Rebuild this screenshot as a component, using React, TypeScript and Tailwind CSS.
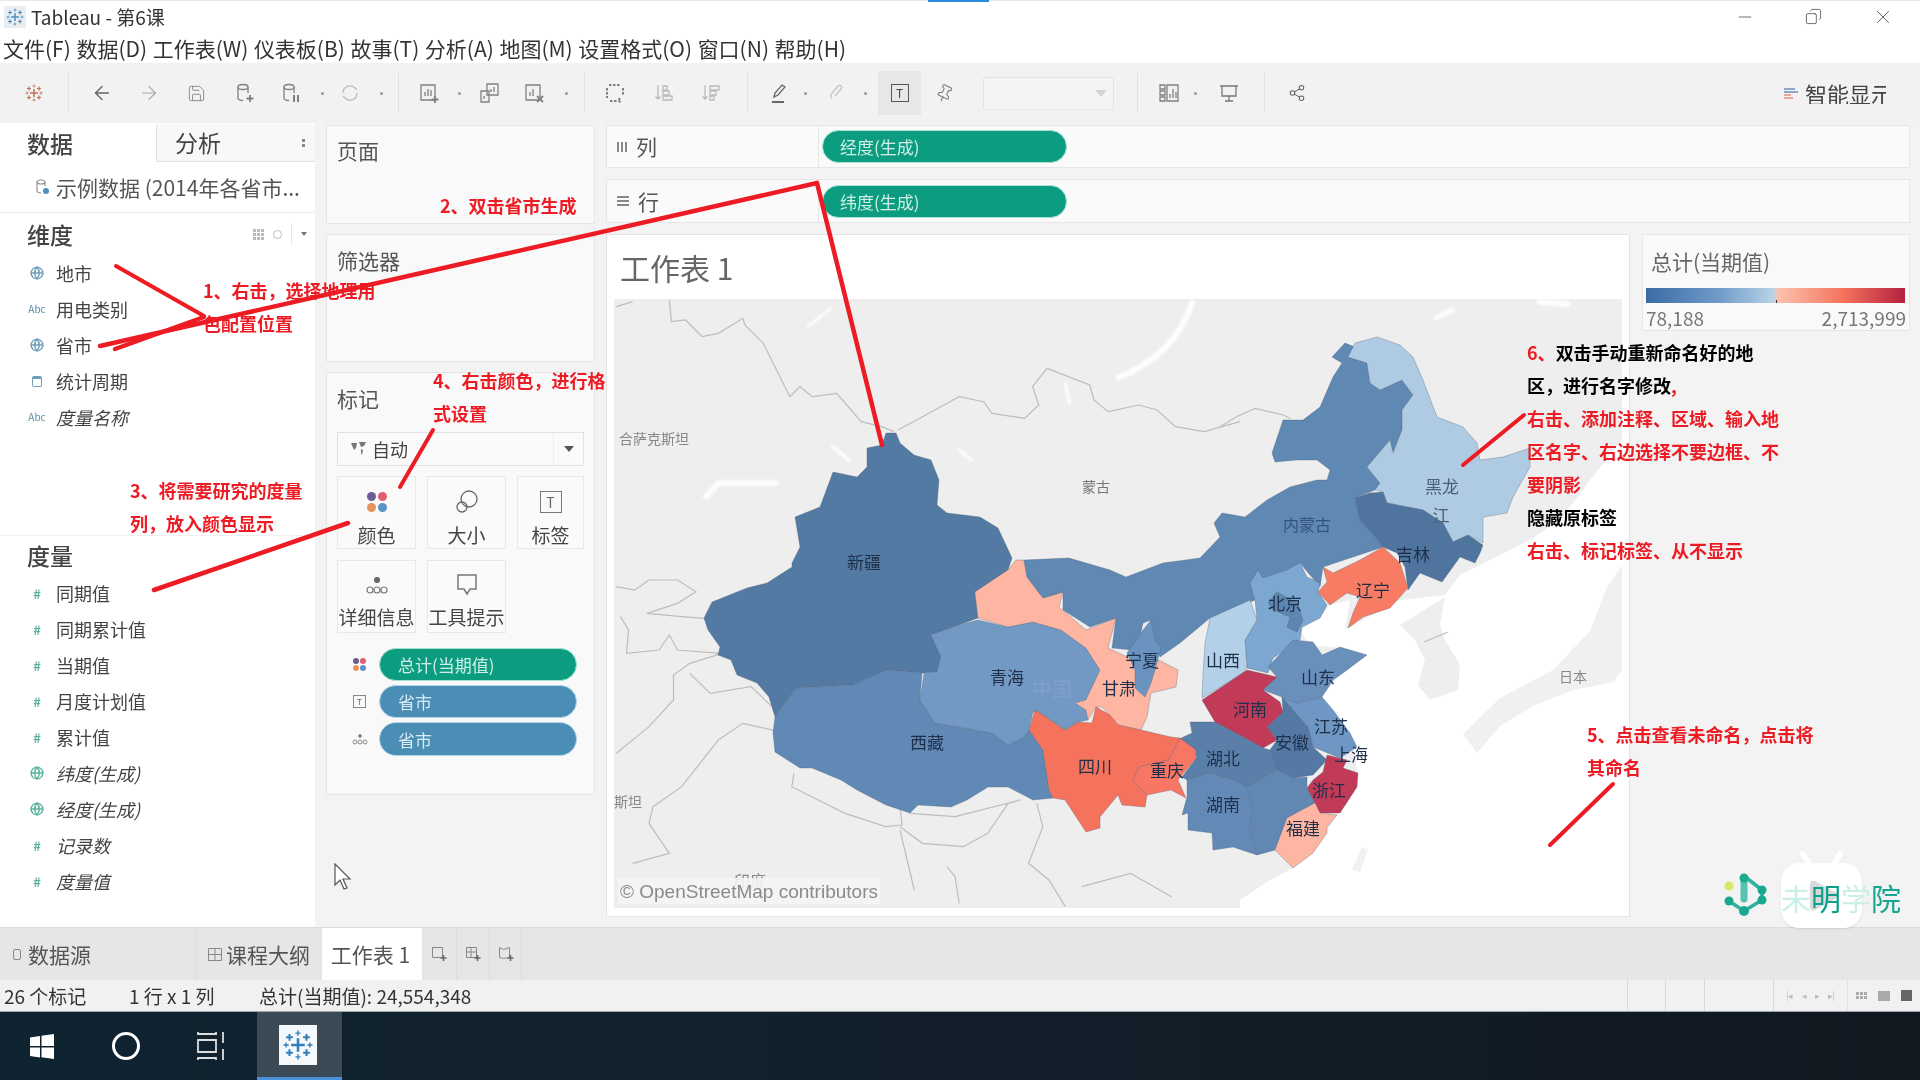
import React from "react";
import { ArrowLeft, ArrowRight, Save, Share2, Pin, Minus, X, Copy, Globe } from "lucide-react";

const z4 = (a: number[]) => { const o: string[] = []; for (let i = 0; i < a.length; i += 2) o.push(`${600 + a[i] / 2.45},${230 + a[i + 1] / 3}`); return o.join(" "); };
const z5 = (a: number[]) => { const o: string[] = []; for (let i = 0; i < a.length; i += 2) o.push(`${600 + a[i] / 2.45},${560 + a[i + 1] / 3}`); return o.join(" "); };
const z10 = (a: number[]) => { const o: string[] = []; for (let i = 0; i < a.length; i += 2) o.push(`${1220 + a[i] / 3},${320 + a[i + 1] / 3}`); return o.join(" "); };

const provinces: { c: string; p: string }[] = [
  { c: "#537aa3", p: "886,433 896,433 900,443 914,455 931,460 939,480 937,505 947,513 980,517 998,528 1012,558 1008,570 975,592 978,618 959,625 931,635 941,657 937,672 922,673 886,670 853,685 796,688 780,710 775,717 769,697 757,683 737,675 731,660 718,655 720,647 708,630 704,618 712,602 747,588 767,583 792,567 792,563 800,547 795,517 820,507 833,472 857,477 867,467 867,448 882,445" },
  { c: "#6089b5", p: "775,717 796,688 853,685 886,670 922,673 920,700 935,723 992,733 1008,745 1024,737 1029,730 1043,750 1049,790 1053,798 1033,800 1008,787 988,787 967,800 951,807 918,805 910,813 886,805 857,790 841,780 812,768 800,768 775,752 773,733" },
  { c: "#7199c4", p: "931,635 959,625 978,620 1008,627 1033,622 1061,630 1086,648 1100,670 1086,700 1075,703 1086,710 1088,720 1078,722 1065,730 1043,715 1033,712 1029,730 1024,737 1008,745 992,733 935,723 920,700 924,673 937,672 941,657" },
  { c: "#feb6a2", p: "1016,560 1024,560 1027,577 1043,598 1063,592 1059,607 1086,630 1116,618 1108,648 1127,657 1159,660 1178,670 1176,687 1151,693 1147,717 1141,730 1118,725 1102,707 1096,707 1088,720 1086,710 1075,703 1086,700 1100,670 1086,648 1061,630 1033,622 1008,627 978,618 975,592 1008,570" },
  { c: "#5f88b2", p: "1024,560 1069,558 1110,570 1126,577 1163,563 1200,558 1220,537 1214,523 1222,513 1245,517 1267,500 1290,487 1317,480 1327,480 1330,470 1317,460 1297,460 1275,462 1272,453 1283,420 1303,420 1320,407 1333,377 1342,363 1332,357 1345,343 1355,347 1348,357 1367,363 1370,383 1380,390 1402,380 1413,395 1402,410 1402,430 1393,453 1390,440 1367,467 1380,483 1375,490 1355,498 1360,520 1378,540 1383,547 1323,567 1320,587 1300,563 1287,570 1263,578 1250,583 1255,600 1217,617 1210,618 1180,643 1160,657 1155,640 1151,620 1143,623 1140,637 1133,650 1112,648 1116,618 1090,627 1063,610 1063,592 1043,598 1027,577" },
  { c: "#6b93bf", p: "1143,630 1151,620 1155,640 1161,648 1155,670 1151,683 1145,697 1135,688 1135,670 1127,653" },
  { c: "#aecbe3", p: "1348,357 1355,343 1377,337 1400,345 1413,357 1423,380 1437,417 1463,427 1477,443 1480,460 1503,457 1530,448 1530,467 1513,497 1507,513 1483,517 1483,543 1468,535 1453,542 1443,523 1423,510 1387,503 1383,492 1375,490 1380,483 1367,467 1390,440 1393,453 1402,430 1402,410 1413,395 1402,380 1380,390 1370,383 1367,363" },
  { c: "#4f759e", p: "1355,498 1370,493 1383,492 1387,503 1423,510 1443,523 1453,542 1468,535 1483,545 1480,553 1475,563 1460,557 1442,582 1420,573 1408,590 1405,567 1397,553 1383,547 1378,540 1360,520" },
  { c: "#7ba7d0", p: "1250,583 1258,570 1263,578 1287,570 1300,563 1307,577 1320,583 1318,592 1327,605 1320,618 1302,627 1300,640 1273,658 1268,673 1247,668 1245,640 1257,620 1255,600" },
  { c: "#5d86b0", p: "1277,592 1297,603 1303,620 1297,632 1287,627 1290,617 1273,610 1268,603" },
  { c: "#b2d0e8", p: "1210,618 1250,600 1257,620 1245,640 1247,668 1243,673 1202,698 1203,673 1205,643" },
  { c: "#6f97c3", p: "1282,697 1297,703 1322,697 1333,710 1350,733 1357,747 1340,758 1313,747 1308,727 1293,710" },
  { c: "#5379a4", p: "1282,697 1293,710 1308,727 1313,747 1327,760 1313,775 1293,778 1277,770 1270,750 1277,740 1267,727 1283,712" },
  { c: "#6990bb", p: "1268,667 1293,640 1313,642 1322,655 1340,647 1367,655 1347,670 1333,680 1322,697 1297,703 1282,697 1263,690 1277,677" },
  { c: "#c13a58", p: "1247,670 1277,677 1263,690 1280,702 1283,712 1267,727 1277,740 1263,748 1243,737 1215,722 1202,700" },
  { c: "#5a7fa8", p: "1190,722 1215,722 1243,737 1263,748 1270,750 1277,770 1247,787 1233,780 1210,773 1187,780 1182,777 1197,757 1177,740 1192,733" },
  { c: "#6389b7", p: "1187,780 1210,773 1233,780 1247,787 1252,807 1250,833 1257,855 1233,847 1213,850 1212,833 1188,830 1188,813 1182,815 1187,797" },
  { c: "#6088b3", p: "1247,787 1277,770 1293,778 1307,777 1307,788 1315,803 1287,818 1275,850 1257,855 1250,833 1252,807" },
  { c: "#c13a58", p: "1327,755 1347,760 1343,768 1358,773 1357,787 1340,813 1320,813 1315,803 1307,788 1313,780 1323,772" },
  { c: "#feb6a2", p: "1315,803 1320,813 1337,815 1327,827 1327,833 1313,853 1293,868 1275,850 1287,818" },
  { c: "#f5735d", p: "1035,710 1043,715 1065,730 1078,722 1092,723 1096,707 1110,715 1118,725 1141,730 1171,737 1180,738 1169,760 1139,767 1133,780 1147,795 1145,807 1122,805 1118,795 1100,817 1100,828 1086,832 1065,800 1053,798 1049,790 1043,750 1029,730" },
  { c: "#f87764", p: "1180,738 1196,750 1196,758 1178,780 1186,798 1171,790 1147,795 1133,780 1139,767 1169,760" },
  { c: "#f87c64", p: "1383,547 1400,563 1408,588 1390,608 1363,617 1348,628 1353,613 1360,597 1347,593 1330,605 1318,592 1327,582 1323,567 1333,573 1360,560" },
];

const labels: [string, number, number, number?, string?][] = [
  ["新疆", 864, 561], ["西藏", 927, 741], ["青海", 1007, 676], ["甘肃", 1119, 687], ["宁夏", 1142, 659], ["四川", 1095, 765],
  ["重庆", 1167, 769], ["山西", 1223, 659], ["河南", 1250, 708], ["湖北", 1223, 757], ["湖南", 1223, 803], ["安徽", 1292, 741],
  ["江苏", 1331, 725], ["上海", 1351, 753], ["浙江", 1329, 789], ["福建", 1303, 827], ["山东", 1318, 676], ["北京", 1285, 602],
  ["辽宁", 1373, 589], ["吉林", 1413, 553], ["内蒙古", 1307, 524, 16, "#33557f"], ["黑龙", 1442, 485, 17, "#4b6078"], ["江", 1441, 514, 17, "#4b6078"],
];

const Field = ({ icon, children, italic }: { icon: string; children: React.ReactNode; italic?: boolean }) => (
  <div className="h-[36px] flex items-center">
    <div className="w-[56px] flex justify-center shrink-0 pl-[20px] pr-[2px]">
      {icon === "geo" && <Globe size={14} className="text-[#6f9fb8]" strokeWidth={2.4} />}
      {icon === "mgeo" && <Globe size={14} className="text-[#58b39d]" strokeWidth={2.4} />}
      {icon === "abc" && <span className="text-[10px] leading-none text-[#5d8ea5]">Abc</span>}
      {icon === "date" && <span className="block w-[10px] h-[11px] border border-[#6f9fb8] rounded-[2px] border-t-[3px]" />}
      {icon === "num" && <span className="text-[13px] leading-none font-bold text-[#5fae9e]">#</span>}
    </div>
    <span className={`text-[18px] leading-none text-[#444] ${italic ? "italic" : ""}`}>{children}</span>
  </div>
);

const Tool = ({ c, children }: { c: string; children?: React.ReactNode }) => (
  <div className={`shrink-0 flex items-center justify-center text-[#8a8a8a] ${c}`}>{children}</div>
);
const Dot = ({ c }: { c: string }) => (
  <div className={`shrink-0 flex items-center justify-center ${c}`}><span className="block w-[3px] h-[3px] rounded-full bg-[#999]" /></div>
);
const Sep = ({ c }: { c: string }) => <div className={`shrink-0 w-px h-[40px] bg-[#e2e2e2] ${c}`} />;
const G = ({ children, s = "#808080" }: { children: React.ReactNode; s?: string }) => (
  <svg width="24" height="24" viewBox="0 0 24 24" fill="none" stroke={s} strokeWidth="1.3">{children}</svg>
);

const MarkBtn = ({ label, children, top }: { label: string; children: React.ReactNode; top?: boolean }) => (
  <div className={`h-full bg-[#fafafa] border border-[#e8e8e8] flex flex-col items-center ${top ? "pt-[8px]" : "pt-[7px]"}`}>
    <div className="h-[34px] flex items-center justify-center">{children}</div>
    <span className={`text-[19px] leading-[26px] text-[#444] whitespace-nowrap ${top ? "mt-[3px]" : "mt-[2px]"}`}>{label}</span>
  </div>
);

const Tableau = ({ size, c }: { size: number; c: string }) => (
  <svg width={size} height={size} viewBox="0 0 40 40" stroke={c} strokeWidth="2.4" fill="none">
    <path d="M20 12v16M12 20h16" strokeWidth="3" />
    <path d="M20 3v6M17 6h6M20 31v6M17 34h6M3 20h6M6 17v6M31 20h6M34 17v6" strokeWidth="1.6" />
    <path d="M10 7v8M6 11h8M30 7v8M26 11h8M10 25v8M6 29h8M30 25v8M26 29h8" />
  </svg>
);

export default function App() {
  return (
    <div className="relative w-[1920px] h-[1080px] overflow-hidden flex flex-col bg-[#f3f3f3] text-[#333] blur-[0.5px] font-['Noto_Sans_CJK_SC',sans-serif]">
      {/* title bar */}
      <div className="h-[34px] shrink-0 bg-white flex items-center pl-[4px] border-t border-[#e8e8e8] pb-[2px]">
        <div className="w-[22px] h-[22px] bg-[#e9eef2] flex items-center justify-center"><Tableau size={20} c="#4f8fc0" /></div>
        <span className="ml-[5px] text-[19px] leading-none text-[#333]">Tableau - 第6课</span>
        <div className="ml-auto flex items-center text-[#555]">
          <Minus size={20} strokeWidth={1} className="mr-[50px]" />
          <Copy size={17} strokeWidth={1.2} className="mr-[50px] -scale-x-100" />
          <X size={22} strokeWidth={1} className="mr-[26px]" />
        </div>
      </div>
      {/* menu */}
      <div className="h-[29px] shrink-0 bg-white flex items-center pl-[3px] gap-[5.6px] text-[21px] leading-none text-[#333] whitespace-nowrap">
        <span>文件(F)</span><span>数据(D)</span><span>工作表(W)</span><span>仪表板(B)</span><span>故事(T)</span><span>分析(A)</span><span>地图(M)</span><span>设置格式(O)</span><span>窗口(N)</span><span>帮助(H)</span>
      </div>
      {/* toolbar */}
      <div className="h-[60px] shrink-0 bg-[#f2f2f2] flex items-center">
        <Tool c="w-[68px]"><Tableau size={20} c="#c0705a" /></Tool>
        <Sep c="" />
        <Tool c="w-[46px] ml-[10px]"><ArrowLeft size={22} strokeWidth={1.5} className="text-[#666]" /></Tool>
        <Tool c="w-[47px]"><ArrowRight size={22} strokeWidth={1.3} className="text-[#aaa]" /></Tool>
        <Tool c="w-[49px]"><Save size={19} strokeWidth={1.2} /></Tool>
        <Tool c="w-[48px]"><G><ellipse cx="10" cy="6" rx="5" ry="2.5" /><path d="M5 6v11c0 1.5 2 2.5 5 2.5M15 6v6" /><path d="M17 14v7M13.500 17.500h7" strokeWidth="1.800" /></G></Tool>
        <Tool c="w-[44px]"><G><ellipse cx="10" cy="6" rx="5" ry="2.5" /><path d="M5 6v11c0 1.500 2 2.500 5 2.500M15 6v6" /><path d="M15 14v7M19 14v7" strokeWidth="2" /></G></Tool>
        <Dot c="w-[18px]" />
        <Tool c="w-[38px]"><G s="#bbb"><path d="M5 12a7 7 0 0 1 12-5l2 2M19 12a7 7 0 0 1-12 5l-2-2" /></G></Tool>
        <Dot c="w-[24px]" />
        <Sep c="ml-[5px]" />
        <Tool c="w-[38px] ml-[11px]"><G><path d="M4 4h14v15H4z" /><path d="M8 15v-4M11 15V8M14 15v-6" /><path d="M18 15v7M14.500 18.500h7" strokeWidth="1.800" /></G></Tool>
        <Dot c="w-[22px]" />
        <Tool c="w-[40px]"><G><path d="M9 3h11v11H9z" /><path d="M3 10h8v11H3z" /><path d="M13 11V8M16 11V6M6 18v-3" /></G></Tool>
        <Tool c="w-[48px]"><G><path d="M4 4h14v15H4z" /><path d="M8 15v-4M11 15V8" /><path d="M15 15l6 6M21 15l-6 6" strokeWidth="1.800" /></G></Tool>
        <Dot c="w-[16px]" />
        <Sep c="ml-[10px]" />
        <Tool c="w-[40px] ml-[10px]"><G><path d="M6 4h12M4 7v10M20 7v8M7 20h8M17 17l-2 3 3 1" strokeDasharray="2.500 1.500" strokeWidth="2" /></G></Tool>
        <Tool c="w-[48px] ml-[5px]"><G s="#bbb"><path d="M6 4v14M3.500 15.500L6 18l2.500-2.500M11 5h4v4h-4zM11 10h6v4h-6zM11 15h9v4h-9z" /></G></Tool>
        <Tool c="w-[46px]"><G s="#bbb"><path d="M6 4v14M3.500 15.500L6 18l2.500-2.500M11 5h9v4h-9zM11 10h6v4h-6zM11 15h4v4h-4z" /></G></Tool>
        <Sep c="ml-[13px]" />
        <Tool c="w-[44px] ml-[9px]"><G s="#666"><path d="M7 16l1-4 7-8 3 2-7 8z" /><path d="M5 21h12" strokeWidth="2" /></G></Tool>
        <Dot c="w-[8px]" />
        <Tool c="w-[54px]"><G s="#c4c4c4"><path d="M8 18c-2-2-1-5 1-7l5-6c2-2 5 1 3 3l-6 7" /></G></Tool>
        <Dot c="w-[4px]" />
        <Tool c="w-[43px] h-[44px] ml-[11px] bg-[#e7e7e7]"><div className="w-[18px] h-[18px] border-[1.500px] border-[#555] flex items-center justify-center text-[12px] leading-none text-[#444]">T</div></Tool>
        <Tool c="w-[46px]"><Pin size={19} strokeWidth={1.3} className="rotate-[25deg] text-[#777]" /></Tool>
        <div className="w-[131px] h-[33px] ml-[16px] shrink-0 bg-[#f4f4f4] border border-[#e4e4e4] rounded-[2px] flex items-center justify-end pr-[6px]"><span className="w-0 h-0 border-x-[6px] border-x-transparent border-t-[7px] border-t-[#d4d4d4]" /></div>
        <Sep c="ml-[23px]" />
        <Tool c="w-[38px] ml-[12px]"><G><path d="M3 4h5v4H3zM3 10h5v4H3zM3 16h5v4H3zM10 4h11v16H10z" /><path d="M13 17v-4M16 17V8M19 17v-6" /></G></Tool>
        <Dot c="w-[14px]" />
        <Tool c="w-[54px]"><G s="#777"><path d="M3 5h18M5 5v10h14V5M12 15v5M8 20h8" /></G></Tool>
        <Sep c="ml-[8px]" />
        <Tool c="w-[46px] ml-[9px]"><Share2 size={18} strokeWidth={1.4} className="text-[#666]" /></Tool>
        <div className="ml-auto mr-[34px] flex items-center w-[102px] overflow-hidden">
          <div className="flex flex-col gap-px mr-[7px] shrink-0">
            <span className="block w-[11px] h-[2px] bg-[#8fa6c8]" /><span className="block w-[14px] h-[2px] bg-[#8fa6c8]" /><span className="block w-[7px] h-[2px] bg-[#e8a69c]" /><span className="block w-[9px] h-[2px] bg-[#e8a69c]" />
          </div>
          <span className="text-[22px] leading-none text-[#444] whitespace-nowrap">智能显示</span>
        </div>
      </div>

      {/* main */}
      <div className="flex-1 min-h-0 flex">
        {/* data pane */}
        <div className="w-[315px] shrink-0 pt-[1px] bg-white flex flex-col">
          <div className="h-[38px] flex shrink-0">
            <div className="w-[156px] flex items-center pl-[27px] text-[23px] leading-none font-medium text-[#444]">数据</div>
            <div className="flex-1 bg-[#f8f8f8] border-l border-b border-[#e2e2e2] flex items-center pl-[18px] text-[23px] leading-none text-[#444]">
              分析
              <span className="ml-auto mr-[10px] flex flex-col gap-[2px]"><i className="block w-[3px] h-[3px] bg-[#888]" /><i className="block w-[3px] h-[3px] bg-[#888]" /></span>
            </div>
          </div>
          <div className="h-[51px] shrink-0 flex items-center border-b border-[#eee] pl-[35px]">
            <svg width="15" height="18" viewBox="0 0 15 18" fill="none" stroke="#888" strokeWidth="1.100" className="mr-[6px] shrink-0"><ellipse cx="6" cy="4" rx="4" ry="2" /><path d="M2 4v9c0 1 2 2 4 2M10 4v4" /><circle cx="11" cy="13" r="3" fill="#4a90c0" stroke="none" /></svg>
            <span className="text-[21px] leading-none text-[#555] whitespace-nowrap">示例数据 (2014年各省市...</span>
          </div>
          <div className="h-[42px] shrink-0 flex items-center pl-[27px] pr-[8px]">
            <span className="text-[23px] leading-none font-medium text-[#444]">维度</span>
            <span className="ml-auto mr-[9px] grid grid-cols-3 gap-px"><i className="block w-[3px] h-[3px] bg-[#bbb]" /><i className="block w-[3px] h-[3px] bg-[#bbb]" /><i className="block w-[3px] h-[3px] bg-[#bbb]" /><i className="block w-[3px] h-[3px] bg-[#bbb]" /><i className="block w-[3px] h-[3px] bg-[#bbb]" /><i className="block w-[3px] h-[3px] bg-[#bbb]" /><i className="block w-[3px] h-[3px] bg-[#bbb]" /><i className="block w-[3px] h-[3px] bg-[#bbb]" /><i className="block w-[3px] h-[3px] bg-[#bbb]" /></span>
            <span className="w-[9px] h-[9px] rounded-full border border-[#bbb] mr-[9px]" />
            <span className="w-px h-[22px] bg-[#e6e6e6] mr-[9px]" />
            <span className="w-0 h-0 border-x-[3px] border-x-transparent border-t-[4px] border-t-[#777]" />
          </div>
          <Field icon="geo">地市</Field>
          <Field icon="abc">用电类别</Field>
          <Field icon="geo">省市</Field>
          <Field icon="date">统计周期</Field>
          <Field icon="abc" italic>度量名称</Field>
          <div className="h-[101px] shrink-0 border-b border-[#f0f0f0]" />
          <div className="h-[39px] shrink-0 flex items-center pl-[27px]">
            <span className="text-[23px] leading-none font-medium text-[#444]">度量</span>
          </div>
          <Field icon="num">同期值</Field>
          <Field icon="num">同期累计值</Field>
          <Field icon="num">当期值</Field>
          <Field icon="num">月度计划值</Field>
          <Field icon="num">累计值</Field>
          <Field icon="mgeo" italic>纬度(生成)</Field>
          <Field icon="mgeo" italic>经度(生成)</Field>
          <Field icon="num" italic>记录数</Field>
          <Field icon="num" italic>度量值</Field>
        </div>

        {/* cards column */}
        <div className="w-[269px] ml-[11px] shrink-0 pt-[2px] flex flex-col gap-[10px]">
          <div className="h-[99px] bg-[#f9f9f9] border border-[#e6e6e6] pl-[10px] pt-[10px] text-[21px] leading-[28px] text-[#555]">页面</div>
          <div className="h-[128px] bg-[#f9f9f9] border border-[#e6e6e6] pl-[10px] pt-[11px] text-[21px] leading-[28px] text-[#555]">筛选器</div>
          <div className="h-[423px] bg-[#f9f9f9] border border-[#e6e6e6] px-[10px]">
            <div className="h-[59px] flex items-center pb-[8px] text-[21px] leading-none text-[#555]">标记</div>
            <div className="h-[34px] bg-[#fafafa] border border-[#e2e2e2] flex items-center pl-[12px]">
              <svg width="18" height="16" viewBox="0 0 18 16" fill="#777" className="mr-[4px]"><path d="M1 2h6l-1 5-2 2zM9 1h7l-2 4-3 1zM11 8l2 1-1 5-1-2z" /></svg>
              <span className="text-[18px] leading-none text-[#444]">自动</span>
              <span className="ml-auto w-[30px] h-full border-l border-[#eee] flex items-center justify-center"><span className="w-0 h-0 border-x-[5px] border-x-transparent border-t-[6px] border-t-[#555]" /></span>
            </div>
            <div className="grid grid-cols-[79px_79px_67px] gap-x-[11px] gap-y-[11px] mt-[10px]">
              <div className="h-[73px]"><MarkBtn top label="颜色"><span className="grid grid-cols-2 gap-[2px]"><i className="block w-[9px] h-[9px] rounded-full bg-[#6d5a96]" /><i className="block w-[9px] h-[9px] rounded-full bg-[#e0606e]" /><i className="block w-[9px] h-[9px] rounded-full bg-[#e8935a]" /><i className="block w-[9px] h-[9px] rounded-full bg-[#5a93c4]" /></span></MarkBtn></div>
              <div className="h-[73px]"><MarkBtn top label="大小"><svg width="24" height="26" viewBox="0 0 24 26" fill="none" stroke="#666" strokeWidth="1.300"><circle cx="14" cy="10" r="8" /><circle cx="7" cy="18" r="5" /></svg></MarkBtn></div>
              <div className="h-[73px]"><MarkBtn top label="标签"><div className="w-[22px] h-[22px] border-[1.500px] border-[#777] flex items-center justify-center text-[14px] leading-none text-[#666]">T</div></MarkBtn></div>
              <div className="h-[73px]"><MarkBtn label="详细信息"><svg width="26" height="24" viewBox="0 0 26 24" fill="none" stroke="#777" strokeWidth="1.200"><circle cx="13" cy="7" r="3" fill="#666" stroke="none" /><circle cx="6" cy="17" r="3" /><circle cx="13" cy="17" r="3" /><circle cx="20" cy="17" r="3" /></svg></MarkBtn></div>
              <div className="h-[73px]"><MarkBtn label="工具提示"><svg width="24" height="26" viewBox="0 0 24 26" fill="none" stroke="#777" strokeWidth="1.500"><path d="M3 3h18v14h-6l-3 5-3-5H3z" /></svg></MarkBtn></div>
            </div>
            <div className="mt-[15px] flex flex-col gap-[4px]">
              <div className="flex items-center h-[33px]">
                <span className="w-[42px] flex justify-center pl-[3px]"><span className="grid grid-cols-2 gap-px"><i className="block w-[6px] h-[6px] rounded-full bg-[#6d5a96]" /><i className="block w-[6px] h-[6px] rounded-full bg-[#e0606e]" /><i className="block w-[6px] h-[6px] rounded-full bg-[#e8935a]" /><i className="block w-[6px] h-[6px] rounded-full bg-[#5a93c4]" /></span></span>
                <div className="w-[198px] h-full rounded-full bg-[#0c9d80] border border-[#a8e0d2] flex items-center pl-[18px] text-[17px] leading-none text-[#cfeee6]">总计(当期值)</div>
              </div>
              <div className="flex items-center h-[33px]">
                <span className="w-[42px] flex justify-center pl-[3px]"><span className="w-[13px] h-[13px] border border-[#888] flex items-center justify-center text-[8px] leading-none text-[#666]">T</span></span>
                <div className="w-[198px] h-full rounded-full bg-[#4a8eb5] border border-[#b4d6e8] flex items-center pl-[18px] text-[17px] leading-none text-[#d8ebf4]">省市</div>
              </div>
              <div className="flex items-center h-[34px]">
                <span className="w-[42px] flex justify-center pl-[3px]"><svg width="16" height="14" viewBox="0 0 16 14" fill="none" stroke="#888" strokeWidth="1"><circle cx="8" cy="4" r="1.800" fill="#777" stroke="none" /><circle cx="3" cy="10" r="2" /><circle cx="8" cy="10" r="2" /><circle cx="13" cy="10" r="2" /></svg></span>
                <div className="w-[198px] h-full rounded-full bg-[#4a8eb5] border border-[#b4d6e8] flex items-center pl-[18px] text-[17px] leading-none text-[#d8ebf4]">省市</div>
              </div>
            </div>
          </div>
        </div>

        {/* shelves + view */}
        <div className="w-[1304px] ml-[11px] shrink-0 pt-[2px] flex flex-col gap-[11px]">
          <div className="h-[43px] shrink-0 bg-[#fafafa] border border-[#e6e6e6] flex items-center">
            <div className="w-[212px] h-full border-r border-[#e6e6e6] flex items-center pl-[10px]">
              <span className="flex gap-[2px] mr-[9px]"><i className="block w-[2px] h-[10px] bg-[#888]" /><i className="block w-[2px] h-[10px] bg-[#888]" /><i className="block w-[2px] h-[10px] bg-[#888]" /></span>
              <span className="text-[21px] leading-none text-[#555]">列</span>
            </div>
            <div className="ml-[3px] w-[245px] h-[33px] rounded-full bg-[#0c9d80] border border-[#a8e0d2] flex items-center pl-[17px] text-[17px] leading-none text-[#cfeee6]">经度(生成)</div>
          </div>
          <div className="h-[44px] shrink-0 bg-[#fafafa] border border-[#e6e6e6] flex items-center">
            <div className="w-[212px] h-full border-r border-[#e6e6e6] flex items-center pl-[10px]">
              <span className="flex flex-col gap-[2px] mr-[9px]"><i className="block w-[12px] h-[2px] bg-[#888]" /><i className="block w-[12px] h-[2px] bg-[#888]" /><i className="block w-[12px] h-[2px] bg-[#888]" /></span>
              <span className="text-[21px] leading-none text-[#555]">行</span>
            </div>
            <div className="ml-[3px] w-[245px] h-[33px] rounded-full bg-[#0c9d80] border border-[#a8e0d2] flex items-center pl-[17px] text-[17px] leading-none text-[#cfeee6]">纬度(生成)</div>
          </div>
          <div className="h-[683px] shrink-0 flex">
            <div className="w-[1024px] h-full bg-white border border-[#e4e4e4] flex flex-col">
              <div className="h-[64px] shrink-0 flex items-center pl-[13px] text-[30px] leading-none text-[#666]">工作表 1</div>
              <div className="relative mx-[7px] mb-[8px] flex-1 min-h-0 overflow-hidden">
                <svg viewBox="614 299 1008 609" className="block w-full h-full">
                  <rect x="614" y="299" width="1008" height="609" fill="#eeeeee" />
                  <polygon fill="#ffffff" points="1622,440 1590,480 1560,520 1530,540 1490,560 1460,575 1445,595 1400,600 1363,620 1345,630 1350,600 1330,605 1320,618 1300,630 1310,645 1340,648 1367,655 1335,680 1322,697 1350,733 1358,775 1337,815 1313,853 1293,868 1270,880 1240,900 1240,908 1622,908" />
                  <polygon fill="#eeeeee" points="1400,625 1445,597 1440,625 1445,640 1460,665 1458,690 1430,700 1418,685 1425,660 1415,640" />
                  <polygon fill="#f0f0f0" points="1463,734 1500,698 1553,670 1590,631 1607,587 1622,565 1622,670 1613,682 1573,690 1533,706 1500,726 1477,753" />
                  <polygon fill="#f1f1f1" points="1352,870 1362,847 1368,850 1360,872" />
                  <g fill="none" stroke="#fdfdfd" strokeLinecap="round" className="blur-[1px]">
                    <path d="M1192,303 Q1175,355 1118,378" strokeWidth="6" />
                    <polyline strokeWidth="6" points={z4([260, 800, 290, 760, 430, 760])} />
                    <polyline strokeWidth="3" points={z4([510, 290, 565, 235])} />
                    <polyline strokeWidth="4" points={z4([570, 650, 610, 690])} />
                    <polyline strokeWidth="3" points={z4([880, 660, 910, 690])} />
                    <polyline strokeWidth="3" points={z4([1140, 460, 1150, 520])} />
                    <polyline strokeWidth="5" points="1436,318 1452,310" />
                    <polyline strokeWidth="6" points="1540,302 1568,304" />
                  </g>
                  <g fill="none" stroke="#bdbdbd" strokeWidth="1.200">
                    <polyline points={z4([170, 210, 175, 275, 210, 270, 250, 320, 290, 310, 350, 265, 355, 285, 400, 340, 465, 500, 490, 470, 520, 500, 580, 490, 640, 575, 690, 590, 720, 605])} />
                    <polyline points={z4([730, 600, 790, 560, 880, 500, 940, 515, 960, 550, 1040, 565, 1075, 525, 1060, 470, 1095, 415, 1200, 465, 1210, 510, 1245, 545, 1320, 525, 1365, 540, 1410, 590, 1480, 605, 1568, 575])} />
                    <polyline points={z10([0, 320, 50, 290, 105, 265, 190, 285, 210, 295])} />
                    <polyline points={z4([40, 230, 80, 215])} />
                    <polyline points={z5([40, 80, 85, 90, 120, 60, 190, 60, 235, 95, 190, 130, 115, 160, 200, 170, 255, 175])} />
                    <polyline points={z5([50, 170, 70, 210, 65, 280, 145, 270, 170, 225, 190, 270, 295, 280])} />
                    <polyline points={z5([300, 280, 220, 310, 180, 345, 180, 420, 120, 500, 40, 580])} />
                    <polyline points={z5([220, 340, 270, 400, 370, 380, 430, 450, 440, 515, 350, 490, 290, 540, 200, 680, 130, 740, 120, 790, 170, 880, 80, 910])} />
                    <polyline points={z5([475, 640, 470, 680, 600, 760, 700, 800, 740, 795, 735, 735])} />
                    <polyline points={z5([735, 800, 790, 850, 890, 860, 950, 820, 1000, 730, 1030, 720, 870, 770, 760, 760])} />
                    <polyline points={z5([1070, 730, 1085, 800, 1050, 910, 1100, 960, 1140, 1040])} />
                    <polyline points={z5([735, 810, 770, 990])} />
                    <polyline points={z5([850, 920, 870, 950, 880, 1030])} />
                    <polyline points={z5([1180, 980, 1300, 940, 1400, 1010])} />
                    <polyline points="1424,642 1448,632" />
                  </g>
                  {provinces.map((p, i) => (
                    <polygon key={i} points={p.p} fill={p.c} stroke="#4a5a70" strokeOpacity="0.4" strokeWidth="0.800" strokeLinejoin="round" />
                  ))}
                  <g className="font-['Noto_Sans_CJK_SC',sans-serif]" textAnchor="middle" dominantBaseline="central">
                    {labels.map(([t, x, y, fs, col], i) => (
                      <text key={i} x={x} y={y} fontSize={fs ?? 17} fill={col ?? "#1f2f4a"}>{t}</text>
                    ))}
                    <text x="1052" y="688" fontSize="20" fill="#7fa1c6">中国</text>
                    <text x="1096" y="486" fontSize="14" fill="#777">蒙古</text>
                    <text x="654" y="438" fontSize="14" fill="#888">合萨克斯坦</text>
                    <text x="1573" y="676" fontSize="14" fill="#888">日本</text>
                    <text x="628" y="801" fontSize="14" fill="#888">斯坦</text>
                    <text x="750" y="880" fontSize="16" fill="#888">印度</text>
                  </g>
                </svg>
                <div className="absolute left-[4px] bottom-[4px] h-[26px] px-[2px] bg-[#f4f4f4]/90 flex items-center text-[19px] leading-none text-[#8a8a8a] font-['Liberation_Sans',sans-serif] whitespace-nowrap">© OpenStreetMap contributors</div>
              </div>
            </div>
            <div className="w-[268px] h-[97px] ml-[12px] bg-[#f9f9f9] border border-[#e6e6e6] flex flex-col px-[3px]">
              <div className="h-[53px] flex items-center pl-[5px] text-[21px] leading-none text-[#666]">总计(当期值)</div>
              <div className="relative h-[15px] w-[259px] bg-[linear-gradient(90deg,#3b6ba5_0%,#6f9bc8_28%,#b7d2e8_49%,#fcc2ad_51%,#f5735d_76%,#b5213f_100%)]">
                <span className="absolute left-[130px] bottom-0 w-px h-[3px] bg-[#333]" />
              </div>
              <div className="flex justify-between mt-[3px] text-[19px] leading-[24px] text-[#777]"><span>78,188</span><span>2,713,999</span></div>
            </div>
          </div>
        </div>
      </div>

      {/* sheet tabs */}
      <div className="h-[53px] shrink-0 bg-[#e6e6e6] border-t border-[#dcdcdc] flex text-[21px] leading-none text-[#555] whitespace-nowrap">
        <div className="w-[196px] flex items-center pl-[13px] border-r border-[#dcdcdc]">
          <span className="block w-[8px] h-[11px] border border-[#888] rounded-[2px] mr-[7px]" />数据源
        </div>
        <div className="w-[126px] flex items-center pl-[12px]">
          <svg width="14" height="13" viewBox="0 0 14 13" fill="none" stroke="#888" className="mr-[4px] shrink-0"><path d="M.500.500h13v12H.500zM7 .500v12M.500 6.500h13" /></svg>课程大纲
        </div>
        <div className="w-[100px] bg-white flex items-center justify-center pr-[3px]">工作表 1</div>
        <div className="w-[35px] border-r border-[#dcdcdc] flex items-center justify-center"><svg width="16" height="16" viewBox="0 0 16 16" fill="none" stroke="#888"><path d="M1.500 1.500h10v10h-10z" /><path d="M12.500 9v6M9.500 12h6" stroke="#666" strokeWidth="1.500" /></svg></div>
        <div className="w-[33px] border-r border-[#dcdcdc] flex items-center justify-center"><svg width="16" height="16" viewBox="0 0 16 16" fill="none" stroke="#888"><path d="M1.500 1.500h10v10h-10zM1.500 6h10M6 1.500v10" /><path d="M12.500 9v6M9.500 12h6" stroke="#666" strokeWidth="1.500" /></svg></div>
        <div className="w-[32px] border-r border-[#dcdcdc] flex items-center justify-center"><svg width="16" height="16" viewBox="0 0 16 16" fill="none" stroke="#888"><path d="M1.500 1.500l4 2 6-2v10l-6 1-4-1z" /><path d="M12.500 9v6M9.500 12h6" stroke="#666" strokeWidth="1.500" /></svg></div>
      </div>
      {/* status bar */}
      <div className="h-[31px] shrink-0 bg-[#f1f1f1] flex items-center text-[19px] leading-none text-[#333] whitespace-nowrap">
        <span className="w-[129px] pl-[4px]">26 个标记</span>
        <span className="w-[130px]">1 行 x 1 列</span>
        <span>总计(当期值): 24,554,348</span>
        <div className="ml-auto flex h-full items-center text-[#bbb]">
          <span className="w-[38px] h-full border-l border-[#d8d8d8]" />
          <span className="w-[39px] h-full border-l border-[#d8d8d8]" />
          <span className="w-[69px] h-full border-l border-[#d8d8d8]" />
          <span className="w-[74px] h-full border-l border-[#d8d8d8] flex items-center justify-center gap-[8px] text-[9px]"><span>|◂</span><span>◂</span><span>▸</span><span>▸|</span></span>
          <span className="w-[73px] h-full border-l border-[#e2e2e2] flex items-center pl-[8px] gap-[11px]">
            <span className="grid grid-cols-3 gap-[1px]"><i className="block w-[3px] h-[3px] bg-[#aaa]" /><i className="block w-[3px] h-[3px] bg-[#aaa]" /><i className="block w-[3px] h-[3px] bg-[#aaa]" /><i className="block w-[3px] h-[3px] bg-[#aaa]" /><i className="block w-[3px] h-[3px] bg-[#aaa]" /><i className="block w-[3px] h-[3px] bg-[#aaa]" /></span>
            <span className="block w-[12px] h-[10px] bg-[#aaa]" />
            <span className="block w-[11px] h-[11px] bg-[#666]" />
          </span>
        </div>
      </div>
      {/* taskbar */}
      <div className="h-[69px] shrink-0 bg-[linear-gradient(90deg,#0f2330_0%,#12202c_40%,#111820_100%)] flex items-stretch border-t border-[#9aa4ac]">
        <div className="w-[84px] flex items-center justify-center">
          <svg width="24" height="25" viewBox="0 0 24 25" fill="#fff"><path d="M0 3.500l10-1.500v10H0zM11.500 1.800L24 0v12H11.500zM0 13.500h10v10L0 22zM11.500 13.500H24V25l-12.500-1.800z" /></svg>
        </div>
        <div className="w-[83px] flex items-center justify-center"><span className="block w-[28px] h-[28px] rounded-full border-[3px] border-white" /></div>
        <div className="w-[90px] flex items-center justify-center pr-[4px]">
          <svg width="31" height="28" viewBox="0 0 31 28" fill="none" stroke="#ddd" strokeWidth="1.800"><path d="M3 0v2h18V0M3 8h18v12H3zM3 28v-2h18v2M28 0v11M28 17v11" /></svg>
        </div>
        <div className="w-[85px] bg-[#3c4a55] border-b-[3px] border-[#4a90d9] flex items-center justify-center pr-[4px]">
          <div className="w-[38px] h-[40px] bg-[#f5f8fa] flex items-center justify-center"><Tableau size={34} c="#2f7fbc" /></div>
        </div>
      </div>

      {/* video progress line */}
      <div className="absolute left-[928px] top-0 w-[61px] h-[2px] bg-[#2a8ae0]" />

      {/* mouse cursor */}
      <svg className="absolute left-[334px] top-[863px]" width="20" height="28" viewBox="0 0 20 28" fill="#fff" stroke="#555" strokeWidth="1.200"><path d="M1 1v21l5-5 4 9 3-1-4-9h7z" /></svg>

      {/* red annotation strokes */}
      <svg className="absolute left-0 top-0 pointer-events-none" width="1920" height="1080" fill="none" stroke="#ed1c24" strokeLinecap="round">
        <line x1="116" y1="266" x2="204" y2="316" strokeWidth="4" />
        <line x1="100" y1="346" x2="817" y2="183" strokeWidth="4.500" />
        <line x1="115" y1="349" x2="204" y2="317" strokeWidth="4.500" />
        <line x1="817" y1="183" x2="882" y2="445" strokeWidth="4.500" />
        <line x1="154" y1="590" x2="348" y2="523" strokeWidth="4.500" />
        <line x1="433" y1="430" x2="400" y2="487" strokeWidth="4" />
        <line x1="1613" y1="784" x2="1550" y2="845" strokeWidth="4" />
        <line x1="1524" y1="415" x2="1463" y2="465" strokeWidth="4" />
      </svg>

      {/* red annotation texts */}
      <div className="absolute left-[203px] top-[274px] text-[18px] leading-[33px] font-bold text-[#ed1c24] whitespace-nowrap"><div>1、右击，选择地理用</div><div>色配置位置</div></div>
      <div className="absolute left-[440px] top-[189px] text-[18px] leading-[33px] font-bold text-[#ed1c24] whitespace-nowrap">2、双击省市生成</div>
      <div className="absolute left-[130px] top-[474px] text-[18px] leading-[33px] font-bold text-[#ed1c24] whitespace-nowrap"><div>3、将需要研究的度量</div><div>列，放入颜色显示</div></div>
      <div className="absolute left-[433px] top-[364px] text-[18px] leading-[33px] font-bold text-[#ed1c24] whitespace-nowrap"><div>4、右击颜色，进行格</div><div>式设置</div></div>
      <div className="absolute left-[1587px] top-[718px] text-[18px] leading-[33px] font-bold text-[#ed1c24] whitespace-nowrap"><div>5、点击查看未命名，点击将</div><div>其命名</div></div>
      <div className="absolute left-[1527px] top-[336px] text-[18px] leading-[33px] font-bold text-[#ed1c24] whitespace-nowrap">
        <div>6、<span className="text-black">双击手动重新命名好的地</span></div>
        <div><span className="text-black">区，进行名字修改</span>,</div>
        <div>右击、添加注释、区域、输入地</div>
        <div>区名字、右边选择不要边框、不</div>
        <div>要阴影</div>
        <div className="text-black">隐藏原标签</div>
        <div>右击、标记标签、从不显示</div>
      </div>

      {/* watermark */}
      <div className="absolute left-[1781px] top-[851px] w-[81px] h-[77px]">
        <svg className="absolute left-0 top-0" width="81" height="20" viewBox="0 0 81 20" stroke="#fff" strokeWidth="6" strokeLinecap="round"><path d="M22 3l8 13M59 3l-8 13" /></svg>
        <div className="absolute left-0 top-[12px] w-[81px] h-[65px] bg-white rounded-[18px] shadow-[0_1px_2px_rgba(0,0,0,0.1)]" />
        <svg className="absolute left-[27px] top-[29px]" width="30" height="31" viewBox="0 0 30 31" fill="#d9d9d9"><path d="M2 4c0-3 3-4 5-3l20 11c3 2 3 5 0 7L7 30c-2 1-5 0-5-3z" /></svg>
      </div>
      <svg className="absolute left-[1724px] top-[873px]" width="44" height="46" viewBox="0 0 44 46" fill="none" stroke="#2fb3a0" strokeWidth="3.500" strokeLinecap="round" strokeLinejoin="round">
        <path d="M5 28l15 10 18-11V17L20 3v19" />
        <path d="M20 8v18" strokeWidth="7" stroke="#55c2b2" />
        <g fill="#18a98f" stroke="none"><circle cx="5" cy="28" r="4.500" /><circle cx="20" cy="38" r="5" /><circle cx="38" cy="27" r="4.500" /><circle cx="38" cy="17" r="4.500" /><circle cx="20" cy="5" r="4.500" /></g>
        <circle cx="5" cy="13" r="4.500" fill="#d9e66a" stroke="none" />
      </svg>
      <div className="absolute left-[1781px] top-[879px] flex text-[30px] leading-[36px] whitespace-nowrap font-['Noto_Sans_CJK_SC',sans-serif]">
        <span className="text-[#c9efe7]">未</span><span className="text-[#0f9f8a]">明</span><span className="text-[#c9efe7]">学</span><span className="text-[#17a68f]">院</span>
      </div>
    </div>
  );
}
